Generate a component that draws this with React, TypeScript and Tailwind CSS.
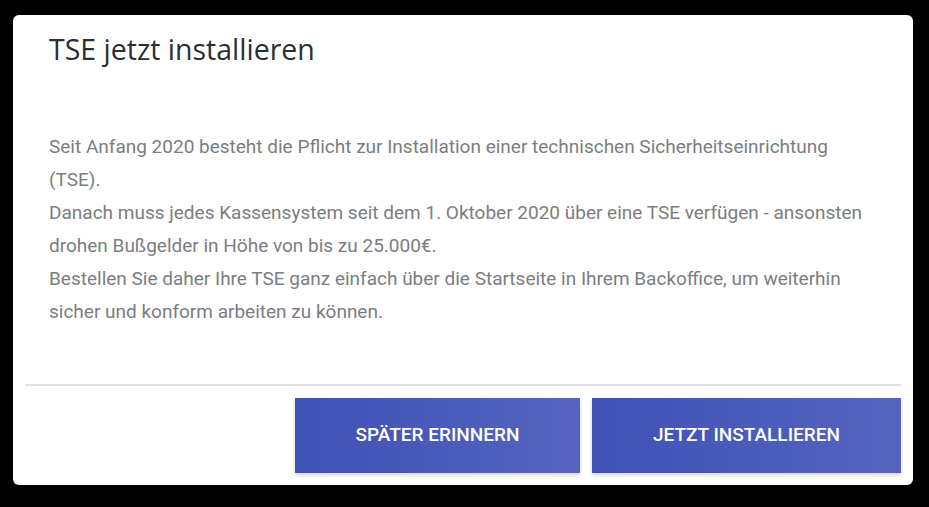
import React from 'react'

export default function App() {
	return (
		<div className="w-[929px] h-[507px] bg-black pt-[15px] pl-[13px]">
			<div className="w-[900px] h-[470px] bg-white rounded-md flex flex-col">
				<h1 className="px-9 pt-4 text-[28.5px] leading-[37px] text-[#2b2f33] font-['Open_Sans',sans-serif] font-normal">
					TSE jetzt installieren
				</h1>
				<div className="mt-[62px] pl-9 pr-8 text-[19px] leading-[33px] text-[#7b7d80] font-['Roboto',sans-serif]">
					<p>Seit Anfang 2020 besteht die Pflicht zur Installation einer technischen Sicherheitseinrichtung (TSE).</p>
					<p>Danach muss jedes Kassensystem seit dem 1. Oktober 2020 über eine TSE verfügen - ansonsten drohen Bußgelder in Höhe von bis zu 25.000€.</p>
					<p>Bestellen Sie daher Ihre TSE ganz einfach über die Startseite in Ihrem Backoffice, um weiterhin sicher und konform arbeiten zu können.</p>
				</div>
				<div className="flex-1" />
				<div className="mx-3 h-[2px] bg-[#e3e0de]" />
				<div className="flex justify-end gap-3 px-3 pt-3 pb-3">
					<button className="w-[285px] h-[75px] bg-gradient-to-r from-[#3f51b5] to-[#5564bf] shadow-[0_2px_4px_rgba(0,0,0,0.18)] text-white text-[19px] font-medium uppercase font-['Roboto',sans-serif]">
						Später erinnern
					</button>
					<button className="w-[309px] h-[75px] bg-gradient-to-r from-[#3f51b5] to-[#5564bf] shadow-[0_2px_4px_rgba(0,0,0,0.18)] text-white text-[19px] font-medium uppercase font-['Roboto',sans-serif]">
						Jetzt installieren
					</button>
				</div>
			</div>
		</div>
	)
}
